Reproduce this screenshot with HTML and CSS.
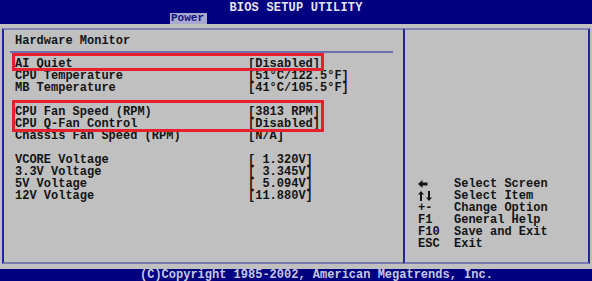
FILE: index.html
```html
<!DOCTYPE html>
<html lang="en">
<head>
    <meta charset="UTF-8">
    <title>BIOS Setup Utility - Hardware Monitor</title>
    <link rel="stylesheet" href="styles.css">
</head>
<body>
    <div class="screen">
        <!-- Top bar with title and active tab -->
        <div class="top-bar">
            <div class="title">BIOS SETUP UTILITY</div>
            <div class="tab">Power</div>
        </div>

        <div class="panels">
            <div class="main-panel">
                <div class="panel-title">Hardware Monitor</div>
                <div class="divider"></div>

                <div class="items">
                    <div class="row"><span>AI Quiet</span><span>[Disabled]</span></div>
                    <div class="row"><span>CPU Temperature</span><span>[51°C/122.5°F]</span></div>
                    <div class="row"><span>MB Temperature</span><span>[41°C/105.5°F]</span></div>
                    <div class="row blank"></div>
                    <div class="row"><span>CPU Fan Speed (RPM)</span><span>[3813 RPM]</span></div>
                    <div class="row"><span>CPU Q-Fan Control</span><span>[Disabled]</span></div>
                    <div class="row"><span>Chassis Fan Speed (RPM)</span><span>[N/A]</span></div>
                    <div class="row blank"></div>
                    <div class="row"><span>VCORE Voltage</span><span>[ 1.320V]</span></div>
                    <div class="row"><span>3.3V Voltage</span><span>[ 3.345V]</span></div>
                    <div class="row"><span>5V Voltage</span><span>[ 5.094V]</span></div>
                    <div class="row"><span>12V Voltage</span><span>[11.880V]</span></div>

                    <!-- red highlight boxes drawn over the rows -->
                    <div class="mark mark-quiet"></div>
                    <div class="mark mark-fan"></div>
                </div>
            </div>

            <div class="help-panel">
                <div class="help">
                    <div class="help-row">
                        <span class="key">
                            <svg width="10" height="8" viewBox="0 0 10 8"><path d="M0 4 L4.5 0 L4.5 2.5 L9.5 2.5 L9.5 5.5 L4.5 5.5 L4.5 8 Z" fill="#141414"/></svg>
                        </span>
                        <span>Select Screen</span>
                    </div>
                    <div class="help-row">
                        <span class="key">
                            <svg width="14" height="10" viewBox="0 0 14 10"><path d="M3 0 L6 3.5 L4 3.5 L4 10 L2 10 L2 3.5 L0 3.5 Z" fill="#141414"/><path d="M11 10 L14 6.5 L12 6.5 L12 0 L10 0 L10 6.5 L8 6.5 Z" fill="#141414"/></svg>
                        </span>
                        <span>Select Item</span>
                    </div>
                    <div class="help-row"><span class="key">+-</span><span>Change Option</span></div>
                    <div class="help-row"><span class="key">F1</span><span>General Help</span></div>
                    <div class="help-row"><span class="key">F10</span><span>Save and Exit</span></div>
                    <div class="help-row"><span class="key">ESC</span><span>Exit</span></div>
                </div>
            </div>
        </div>

        <div class="bottom-bar">(C)Copyright 1985-2002, American Megatrends, Inc.</div>
    </div>
</body>
</html>
```

FILE: styles.css
```css
body {
    margin: 0;
    background-color: #c0c0c0;
    font-family: "Liberation Mono", "DejaVu Sans Mono", monospace;
    font-size: 12px;
    line-height: 12px;
    color: #141414;
}

.screen {
    width: 592px;
    height: 281px;
    display: flex;
    flex-direction: column;
    overflow: hidden;
}

.top-bar {
    height: 24px;
    background-color: #000080;
    position: relative;
    flex-shrink: 0;
}

.title {
    text-align: center;
    color: #e4e4f4;
    font-weight: bold;
    padding-top: 2px;
    letter-spacing: 0.2px;
}

.tab {
    position: absolute;
    left: 170px;
    top: 13px;
    width: 37px;
    height: 11px;
    background-color: #a8a8d0;
    color: #10107a;
    font-weight: bold;
    font-size: 11px;
    line-height: 11px;
    padding-left: 1px;
    box-sizing: border-box;
}

.panels {
    display: flex;
    margin: 4px 2px 0 2px;
    height: 236px;
    flex-shrink: 0;
}

.main-panel {
    width: 401px;
    border-top: 2px solid #8282b6;
    border-bottom: 2px solid #7a7ab2;
    border-left: 2px solid #24249a;
    box-sizing: border-box;
    padding: 5px 10px 0 8px;
}

.panel-title {
    padding-left: 3px;
    font-weight: bold;
}

.divider {
    height: 2px;
    background-color: #6e6eb0;
    margin: 4px 0 5px -2px;
}

.items {
    position: relative;
    padding-left: 3px;
}

.row {
    display: grid;
    grid-template-columns: 233px auto;
    height: 12px;
    font-weight: bold;
    white-space: pre;
}

.mark {
    position: absolute;
    left: 0;
    width: 312px;
    border: 3px solid #e6202c;
    box-sizing: border-box;
}

.mark-quiet {
    top: -5px;
    height: 18px;
}

.mark-fan {
    top: 42px;
    height: 32px;
}

.help-panel {
    flex: 1;
    border: 2px solid #24249a;
    border-top-color: #8282b6;
    border-bottom-color: #7a7ab2;
    box-sizing: border-box;
    display: flex;
    flex-direction: column;
    justify-content: flex-end;
    padding: 0 0 12px 13px;
}

.help-row {
    display: flex;
    align-items: center;
    height: 12px;
    font-weight: bold;
}

.key {
    width: 36px;
    display: flex;
    align-items: center;
}

.bottom-bar {
    margin-top: 5px;
    flex: 1;
    background-color: #000080;
    color: #c8c8e4;
    font-weight: bold;
    padding-left: 140px;
    line-height: 12px;
}
```
